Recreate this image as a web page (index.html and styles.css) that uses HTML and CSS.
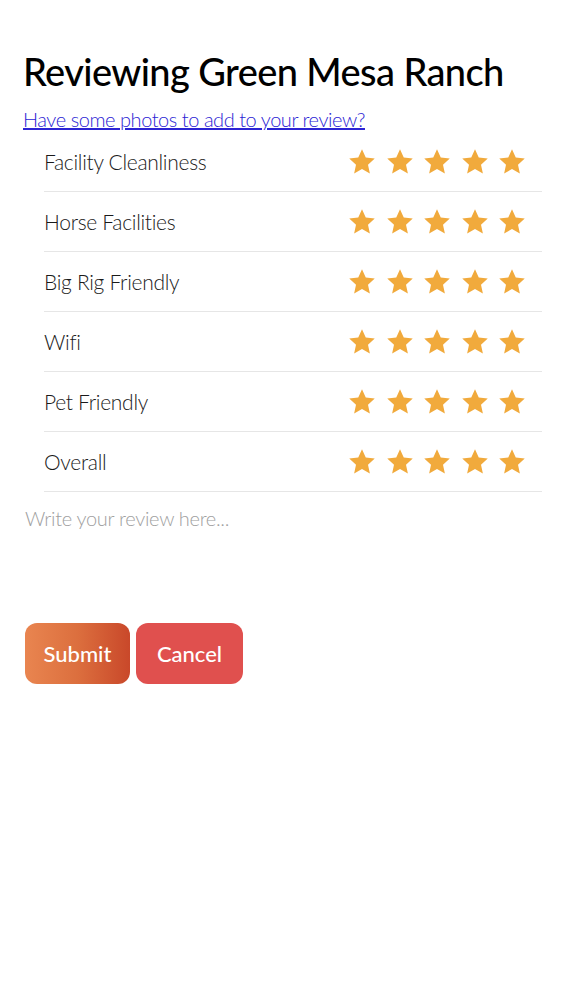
FILE: index.html
```html
<!DOCTYPE html>
<html lang="en">
<head>
  <meta charset="UTF-8">
  <meta name="viewport" content="width=device-width, initial-scale=1.0">
  <title>Review</title>
  <link rel="stylesheet" href="styles.css">
</head>
<body>
  <h1 class="title">Reviewing Green Mesa Ranch</h1>
  <a class="photo-link" href="#">Have some photos to add to your review?</a>

  <div class="ratings">
    <div class="rating-row">
      <span class="rating-label">Facility Cleanliness</span>
      <div class="stars"><svg viewBox="0 0 24 24"><path d="M12 1.8l3 6.6 7.2.8-5.4 4.9 1.5 7.1L12 17.6l-6.3 3.6 1.5-7.1L1.8 9.2 9 8.4z"/></svg><svg viewBox="0 0 24 24"><path d="M12 1.8l3 6.6 7.2.8-5.4 4.9 1.5 7.1L12 17.6l-6.3 3.6 1.5-7.1L1.8 9.2 9 8.4z"/></svg><svg viewBox="0 0 24 24"><path d="M12 1.8l3 6.6 7.2.8-5.4 4.9 1.5 7.1L12 17.6l-6.3 3.6 1.5-7.1L1.8 9.2 9 8.4z"/></svg><svg viewBox="0 0 24 24"><path d="M12 1.8l3 6.6 7.2.8-5.4 4.9 1.5 7.1L12 17.6l-6.3 3.6 1.5-7.1L1.8 9.2 9 8.4z"/></svg><svg viewBox="0 0 24 24"><path d="M12 1.8l3 6.6 7.2.8-5.4 4.9 1.5 7.1L12 17.6l-6.3 3.6 1.5-7.1L1.8 9.2 9 8.4z"/></svg></div>
    </div>
    <div class="rating-row">
      <span class="rating-label">Horse Facilities</span>
      <div class="stars"><svg viewBox="0 0 24 24"><path d="M12 1.8l3 6.6 7.2.8-5.4 4.9 1.5 7.1L12 17.6l-6.3 3.6 1.5-7.1L1.8 9.2 9 8.4z"/></svg><svg viewBox="0 0 24 24"><path d="M12 1.8l3 6.6 7.2.8-5.4 4.9 1.5 7.1L12 17.6l-6.3 3.6 1.5-7.1L1.8 9.2 9 8.4z"/></svg><svg viewBox="0 0 24 24"><path d="M12 1.8l3 6.6 7.2.8-5.4 4.9 1.5 7.1L12 17.6l-6.3 3.6 1.5-7.1L1.8 9.2 9 8.4z"/></svg><svg viewBox="0 0 24 24"><path d="M12 1.8l3 6.6 7.2.8-5.4 4.9 1.5 7.1L12 17.6l-6.3 3.6 1.5-7.1L1.8 9.2 9 8.4z"/></svg><svg viewBox="0 0 24 24"><path d="M12 1.8l3 6.6 7.2.8-5.4 4.9 1.5 7.1L12 17.6l-6.3 3.6 1.5-7.1L1.8 9.2 9 8.4z"/></svg></div>
    </div>
    <div class="rating-row">
      <span class="rating-label">Big Rig Friendly</span>
      <div class="stars"><svg viewBox="0 0 24 24"><path d="M12 1.8l3 6.6 7.2.8-5.4 4.9 1.5 7.1L12 17.6l-6.3 3.6 1.5-7.1L1.8 9.2 9 8.4z"/></svg><svg viewBox="0 0 24 24"><path d="M12 1.8l3 6.6 7.2.8-5.4 4.9 1.5 7.1L12 17.6l-6.3 3.6 1.5-7.1L1.8 9.2 9 8.4z"/></svg><svg viewBox="0 0 24 24"><path d="M12 1.8l3 6.6 7.2.8-5.4 4.9 1.5 7.1L12 17.6l-6.3 3.6 1.5-7.1L1.8 9.2 9 8.4z"/></svg><svg viewBox="0 0 24 24"><path d="M12 1.8l3 6.6 7.2.8-5.4 4.9 1.5 7.1L12 17.6l-6.3 3.6 1.5-7.1L1.8 9.2 9 8.4z"/></svg><svg viewBox="0 0 24 24"><path d="M12 1.8l3 6.6 7.2.8-5.4 4.9 1.5 7.1L12 17.6l-6.3 3.6 1.5-7.1L1.8 9.2 9 8.4z"/></svg></div>
    </div>
    <div class="rating-row">
      <span class="rating-label">Wifi</span>
      <div class="stars"><svg viewBox="0 0 24 24"><path d="M12 1.8l3 6.6 7.2.8-5.4 4.9 1.5 7.1L12 17.6l-6.3 3.6 1.5-7.1L1.8 9.2 9 8.4z"/></svg><svg viewBox="0 0 24 24"><path d="M12 1.8l3 6.6 7.2.8-5.4 4.9 1.5 7.1L12 17.6l-6.3 3.6 1.5-7.1L1.8 9.2 9 8.4z"/></svg><svg viewBox="0 0 24 24"><path d="M12 1.8l3 6.6 7.2.8-5.4 4.9 1.5 7.1L12 17.6l-6.3 3.6 1.5-7.1L1.8 9.2 9 8.4z"/></svg><svg viewBox="0 0 24 24"><path d="M12 1.8l3 6.6 7.2.8-5.4 4.9 1.5 7.1L12 17.6l-6.3 3.6 1.5-7.1L1.8 9.2 9 8.4z"/></svg><svg viewBox="0 0 24 24"><path d="M12 1.8l3 6.6 7.2.8-5.4 4.9 1.5 7.1L12 17.6l-6.3 3.6 1.5-7.1L1.8 9.2 9 8.4z"/></svg></div>
    </div>
    <div class="rating-row">
      <span class="rating-label">Pet Friendly</span>
      <div class="stars"><svg viewBox="0 0 24 24"><path d="M12 1.8l3 6.6 7.2.8-5.4 4.9 1.5 7.1L12 17.6l-6.3 3.6 1.5-7.1L1.8 9.2 9 8.4z"/></svg><svg viewBox="0 0 24 24"><path d="M12 1.8l3 6.6 7.2.8-5.4 4.9 1.5 7.1L12 17.6l-6.3 3.6 1.5-7.1L1.8 9.2 9 8.4z"/></svg><svg viewBox="0 0 24 24"><path d="M12 1.8l3 6.6 7.2.8-5.4 4.9 1.5 7.1L12 17.6l-6.3 3.6 1.5-7.1L1.8 9.2 9 8.4z"/></svg><svg viewBox="0 0 24 24"><path d="M12 1.8l3 6.6 7.2.8-5.4 4.9 1.5 7.1L12 17.6l-6.3 3.6 1.5-7.1L1.8 9.2 9 8.4z"/></svg><svg viewBox="0 0 24 24"><path d="M12 1.8l3 6.6 7.2.8-5.4 4.9 1.5 7.1L12 17.6l-6.3 3.6 1.5-7.1L1.8 9.2 9 8.4z"/></svg></div>
    </div>
    <div class="rating-row">
      <span class="rating-label">Overall</span>
      <div class="stars"><svg viewBox="0 0 24 24"><path d="M12 1.8l3 6.6 7.2.8-5.4 4.9 1.5 7.1L12 17.6l-6.3 3.6 1.5-7.1L1.8 9.2 9 8.4z"/></svg><svg viewBox="0 0 24 24"><path d="M12 1.8l3 6.6 7.2.8-5.4 4.9 1.5 7.1L12 17.6l-6.3 3.6 1.5-7.1L1.8 9.2 9 8.4z"/></svg><svg viewBox="0 0 24 24"><path d="M12 1.8l3 6.6 7.2.8-5.4 4.9 1.5 7.1L12 17.6l-6.3 3.6 1.5-7.1L1.8 9.2 9 8.4z"/></svg><svg viewBox="0 0 24 24"><path d="M12 1.8l3 6.6 7.2.8-5.4 4.9 1.5 7.1L12 17.6l-6.3 3.6 1.5-7.1L1.8 9.2 9 8.4z"/></svg><svg viewBox="0 0 24 24"><path d="M12 1.8l3 6.6 7.2.8-5.4 4.9 1.5 7.1L12 17.6l-6.3 3.6 1.5-7.1L1.8 9.2 9 8.4z"/></svg></div>
    </div>
  </div>

  <textarea class="review-text" placeholder="Write your review here..."></textarea>

  <div class="actions">
    <button class="btn btn-submit" type="submit">Submit</button>
    <button class="btn btn-cancel" type="button">Cancel</button>
  </div>
</body>
</html>
```

FILE: styles.css
```css
body {
  margin: 0;
  padding: 46px 21px 0 23px;
  font-family: Lato, "Noto Sans", sans-serif;
  color: #111;
  background: #fff;
}
.title {
  margin: 0;
  font-size: 38px;
  font-weight: 500;
  line-height: 50px;
  letter-spacing: -0.6px;
  color: #000;
}
.photo-link {
  display: block;
  margin-top: 10px;
  font-size: 20px;
  font-weight: 300;
  line-height: 26px;
  letter-spacing: -0.45px;
  color: #2c24d4;
  text-decoration: underline;
}
.ratings {
  margin-left: 21px;
}
.rating-row {
  display: flex;
  align-items: center;
  justify-content: space-between;
  height: 59px;
  border-bottom: 1px solid #e6e6e6;
}
.rating-label {
  font-size: 21px;
  font-weight: 300;
  letter-spacing: -0.3px;
  color: #1a1a1a;
}
.stars {
  display: flex;
  gap: 7.5px;
  margin-right: 15px;
}
.stars svg {
  width: 30px;
  height: 30px;
  fill: #f1aa3c;
}
.review-text {
  display: block;
  width: 100%;
  height: 110px;
  margin-top: 12px;
  padding: 2px;
  border: none;
  outline: none;
  resize: none;
  font-family: Lato, "Noto Sans", sans-serif;
  font-size: 20px;
  font-weight: 300;
  letter-spacing: -0.3px;
  box-sizing: border-box;
}
.review-text::placeholder {
  color: #a0a0a0;
}
.actions {
  display: flex;
  gap: 6px;
  margin-top: 9px;
  margin-left: 2px;
}
.btn {
  height: 61px;
  border: none;
  border-radius: 12px;
  color: #fff;
  font-family: Lato, "Noto Sans", sans-serif;
  font-size: 22px;
  font-weight: 500;
  cursor: pointer;
}
.btn-submit {
  width: 105px;
  background: linear-gradient(to right, #e98550, #dc6f3e 50%, #c9482a);
}
.btn-cancel {
  width: 107px;
  background-color: #e0504e;
}
```
